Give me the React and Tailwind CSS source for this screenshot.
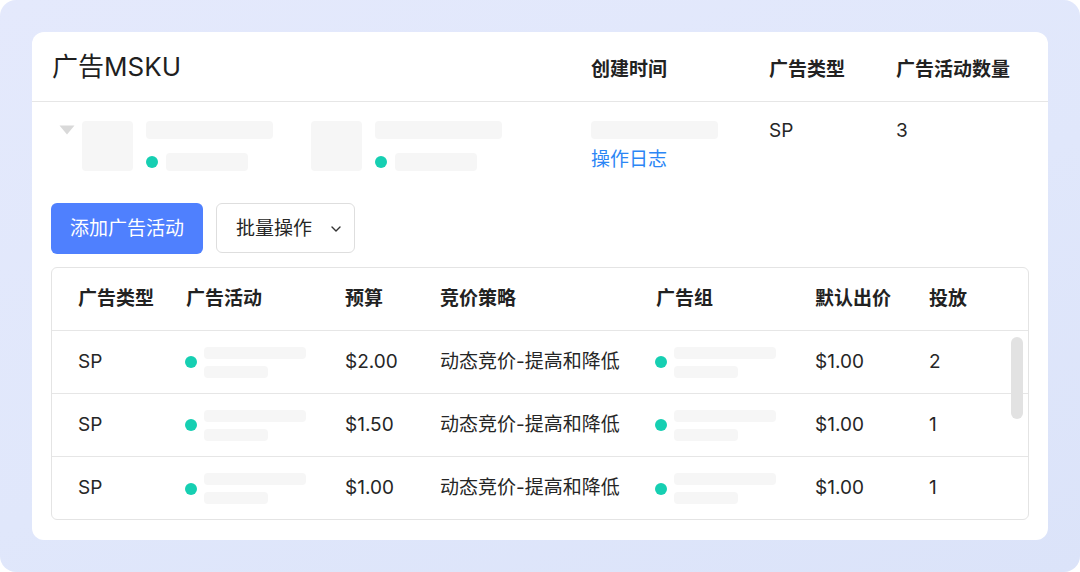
import React from "react";

const FONT = "font-['Inter','Noto_Sans_CJK_SC',sans-serif]";

function Dot() {
  return <span className="block w-3 h-3 rounded-full bg-[#16cfb2] shrink-0" />;
}

function SkelPair() {
  return (
    <div className="flex items-center gap-[7px]">
      <Dot />
      <div className="flex flex-col gap-[7px]">
        <div className="w-[102px] h-3 rounded-[4px] bg-[#f6f6f6]" />
        <div className="w-[64px] h-3 rounded-[4px] bg-[#f6f6f6]" />
      </div>
    </div>
  );
}

function Product() {
  return (
    <div className="flex">
      <div className="w-[51px] h-[50px] rounded-[4px] bg-[#f6f6f6]" />
      <div className="ml-[13px] flex flex-col">
        <div className="w-[127px] h-[18px] rounded-[4px] bg-[#f6f6f6]" />
        <div className="mt-[14px] flex items-center gap-2">
          <Dot />
          <div className="w-[82px] h-[18px] rounded-[4px] bg-[#f6f6f6]" />
        </div>
      </div>
    </div>
  );
}

const rows = [
  { budget: "$2.00", n: "2" },
  { budget: "$1.50", n: "1" },
  { budget: "$1.00", n: "1" },
];

const grid = "grid grid-cols-[108px_159px_95px_216px_159px_114px_1fr] pl-[26px] items-center";

export default function App() {
  return (
    <div className={`w-[1080px] h-[572px] bg-white ${FONT}`}>
      <div className="w-full h-full rounded-[16px] bg-[linear-gradient(160deg,#e4e9fc_0%,#e0e7fb_55%,#dbe3f9_100%)] p-8">
        <div className="w-[1016px] h-[508px] bg-white rounded-[12px] flex flex-col">
          {/* header */}
          <div className="h-[70px] border-b border-[#e6e6e6] flex items-center shrink-0">
            <div className="w-[559px] pl-5 text-[26px] text-[#1f1f1f] leading-none">广告MSKU</div>
            <div className="w-[178px] mt-[8px] text-[19px] font-semibold text-[#222]">创建时间</div>
            <div className="w-[127px] mt-[8px] text-[19px] font-semibold text-[#222]">广告类型</div>
            <div className="mt-[8px] text-[19px] font-semibold text-[#222]">广告活动数量</div>
          </div>
          {/* body */}
          <div className="px-[19px] pt-[19px] flex flex-col">
            <div className="h-[82px] flex">
              <div className="w-[540px] flex">
                <svg className="ml-2 mt-1 shrink-0" width="16" height="10" viewBox="0 0 16 10">
                  <path d="M0.5 0.5 H15.5 L8 9.5 Z" fill="#d9d9d9" />
                </svg>
                <div className="ml-[7px]"><Product /></div>
                <div className="ml-[38px]"><Product /></div>
              </div>
              <div className="w-[178px] flex flex-col">
                <div className="w-[127px] h-[18px] rounded-[4px] bg-[#f6f6f6]" />
                <div className="mt-[8px] text-[19px] text-[#2b86f5] leading-[26px]">操作日志</div>
              </div>
              <div className="w-[127px] text-[19px] text-[#262626] leading-[20px]">SP</div>
              <div className="text-[19px] text-[#262626] leading-[20px]">3</div>
            </div>
            <div className="h-[50px] flex gap-[13px]">
              <button className="h-[51px] px-[19px] pt-[2px] rounded-[6px] bg-[#4f80fe] text-white text-[19px]">添加广告活动</button>
              <button className="h-[50px] w-[139px] pl-[19px] pr-[13px] pt-[2px] rounded-[6px] border border-[#dedede] bg-white text-[#262626] text-[19px] flex items-center justify-between">
                <span>批量操作</span>
                <svg width="10" height="6" viewBox="0 0 10 6">
                  <path d="M1 1 L5 5 L9 1" fill="none" stroke="#333" strokeWidth="1.4" strokeLinecap="round" strokeLinejoin="round" />
                </svg>
              </button>
            </div>
            <div className="mt-[14px] h-[253px] border border-[#e4e4e4] rounded-[6px] relative overflow-hidden">
              <div className={`${grid} h-[63px] border-b border-[#e6e6e6] text-[19px] font-semibold text-[#222]`}>
                <div>广告类型</div>
                <div>广告活动</div>
                <div>预算</div>
                <div>竞价策略</div>
                <div>广告组</div>
                <div>默认出价</div>
                <div>投放</div>
              </div>
              {rows.map((r, i) => (
                <div
                  key={i}
                  className={`${grid} h-[63px] text-[19px] text-[#262626] ${i < rows.length - 1 ? "border-b border-[#e6e6e6]" : ""}`}
                >
                  <div>SP</div>
                  <div className="-ml-px"><SkelPair /></div>
                  <div>{r.budget}</div>
                  <div>动态竞价-提高和降低</div>
                  <div className="-ml-px"><SkelPair /></div>
                  <div>$1.00</div>
                  <div>{r.n}</div>
                </div>
              ))}
              <div className="absolute right-[5px] top-[69px] w-3 h-[82px] rounded-full bg-[#e2e2e2]" />
            </div>
          </div>
        </div>
      </div>
    </div>
  );
}
